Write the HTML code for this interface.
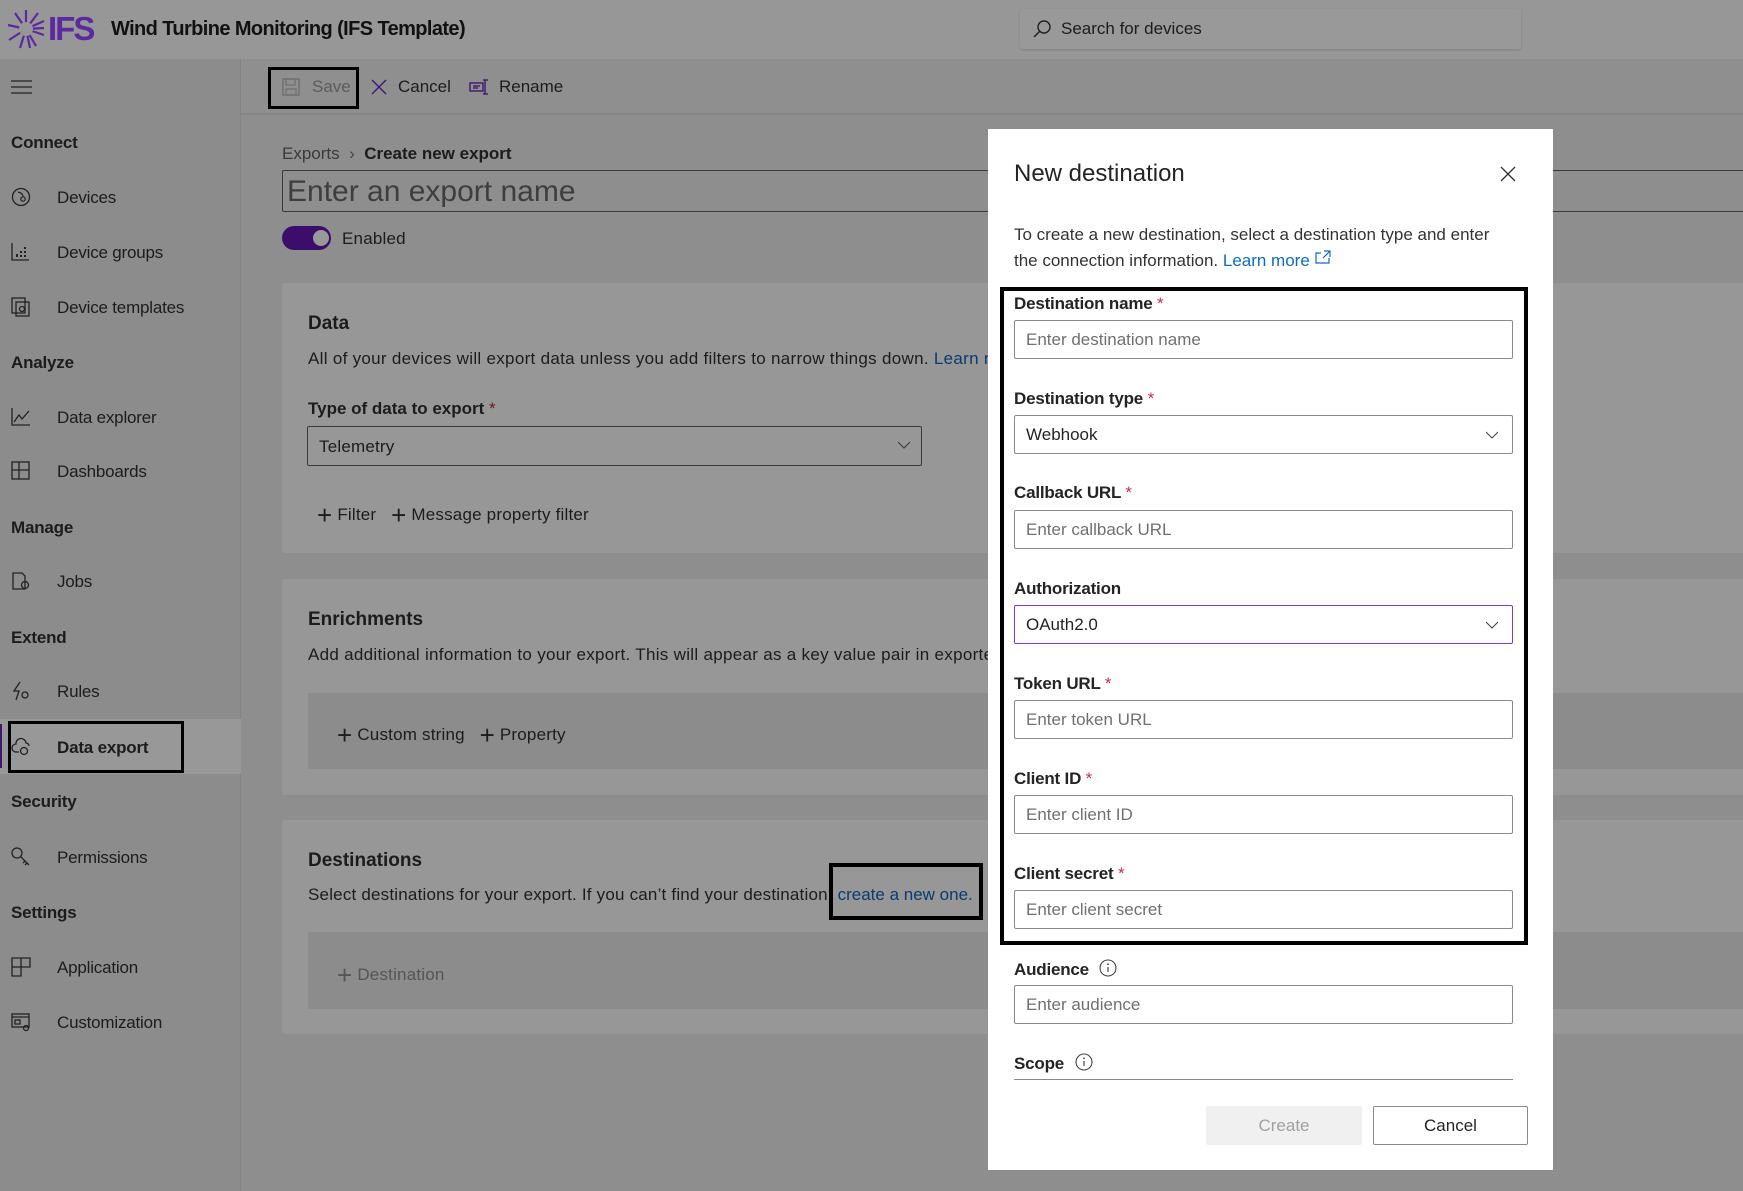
<!DOCTYPE html>
<html><head><meta charset="utf-8"><style>
*{box-sizing:border-box;margin:0;padding:0}
body{width:1743px;height:1191px;position:relative;overflow:hidden;background:#8e8e8e;font-family:"Liberation Sans",sans-serif;color:#1a1a1a}
.a{position:absolute;white-space:nowrap}
.hdr{left:0;top:0;width:1743px;height:59px;background:#979797}
.side{left:0;top:59px;width:241px;height:1132px;background:#8c8c8c;border-right:1px solid #838383}
.tb{left:241px;top:59px;width:1502px;height:56px;background:#8f8f8f;border-bottom:2px solid #858585}
.sh{left:11px;font-size:17px;font-weight:bold;color:#1c1c1c;letter-spacing:-0.2px}
.si{left:57px;font-size:17px;color:#1c1c1c;letter-spacing:-0.2px}
.ic{left:11px;width:20px;height:20px}
.card{background:#979797;border-radius:3px;left:282px;width:1470px}
.inner{background:#8c8c8c;left:308px;width:1440px;border-radius:2px}
.t{font-size:17px;letter-spacing:0.2px;color:#1c1c1c}
.dlg{left:988px;top:129px;width:565px;height:1041px;background:#fff}
.lbl{left:1014px;font-size:17px;font-weight:bold;color:#242424;letter-spacing:-0.2px}
.req{color:#c4314b;font-weight:normal}
.inp{left:1014px;width:499px;height:39px;border:1px solid #8a8a8a;border-radius:2px;padding-left:11px;font-size:17px;color:#707070;line-height:37px}
.chev{position:absolute;right:14px;top:13px;width:12px;height:12px}
</style></head><body>
<div class="a hdr"></div>
<svg class="a" style="left:6px;top:8px" width="40" height="42" viewBox="0 0 40 42"><g stroke="#5b2aa0" stroke-width="2.2" fill="none">
<line x1="20" y1="21" x2="20" y2="2"/><line x1="20" y1="21" x2="32" y2="5"/><line x1="20" y1="21" x2="38" y2="13"/><line x1="20" y1="21" x2="38" y2="27"/><line x1="20" y1="21" x2="30" y2="38"/><line x1="20" y1="21" x2="14" y2="40"/><line x1="20" y1="21" x2="3" y2="32"/><line x1="20" y1="21" x2="2" y2="17"/><line x1="20" y1="21" x2="9" y2="5"/><line x1="20" y1="21" x2="24" y2="40"/><line x1="20" y1="21" x2="38" y2="20"/></g><circle cx="20" cy="21" r="7" fill="#979797"/></svg>
<div class="a" style="left:48px;top:10px;font-size:33px;font-weight:bold;color:#5b2aa0;letter-spacing:-2px">IFS</div>
<div class="a" style="left:111px;top:18px;font-size:20px;font-weight:bold;color:#111;letter-spacing:-0.6px">Wind Turbine Monitoring (IFS Template)</div>
<div class="a" style="left:1020px;top:9px;width:501px;height:40px;background:#999;border-radius:3px;box-shadow:0 1px 2px rgba(0,0,0,.15)"></div>
<svg class="a" style="left:1032px;top:19px" width="20" height="20" viewBox="0 0 20 20"><circle cx="12" cy="8" r="6" stroke="#222" stroke-width="1.4" fill="none"/><line x1="7.5" y1="12.5" x2="2" y2="18" stroke="#222" stroke-width="1.5"/></svg>
<div class="a" style="left:1061px;top:19px;font-size:17px;color:#1c1c1c">Search for devices</div>

<div class="a side"></div>
<div class="a tb"></div>
<svg class="a" style="left:11px;top:80px" width="21" height="14"><g stroke="#222" stroke-width="1.3"><line x1="0" y1="1" x2="21" y2="1"/><line x1="0" y1="7" x2="21" y2="7"/><line x1="0" y1="13" x2="21" y2="13"/></g></svg>
<div class="a" style="left:268px;top:67px;width:91px;height:42px;border:3px solid #000"></div>
<svg class="a" style="left:282px;top:78px" width="18" height="18"><rect x="1" y="1" width="16" height="16" fill="none" stroke="#6e6e6e" stroke-width="1.4"/><rect x="4" y="1" width="9" height="6" fill="none" stroke="#6e6e6e" stroke-width="1.2"/><rect x="4" y="11" width="10" height="6" fill="none" stroke="#6e6e6e" stroke-width="1.2"/></svg>
<div class="a" style="left:312px;top:77px;font-size:17px;color:#5c5c5c">Save</div>
<svg class="a" style="left:371px;top:79px" width="16" height="16"><g stroke="#3b1a70" stroke-width="1.4"><line x1="1" y1="1" x2="15" y2="15"/><line x1="15" y1="1" x2="1" y2="15"/></g></svg>
<div class="a" style="left:398px;top:77px;font-size:17px;color:#1c1c1c">Cancel</div>
<svg class="a" style="left:469px;top:79px" width="20" height="16"><g stroke="#3b1a70" stroke-width="1.4" fill="none"><rect x="1" y="4" width="13" height="8"/><line x1="4" y1="7" x2="11" y2="7"/><line x1="4" y1="9" x2="9" y2="9"/><line x1="16" y1="1" x2="16" y2="15"/><line x1="14" y1="1" x2="19" y2="1"/><line x1="14" y1="15" x2="19" y2="15"/></g></svg>
<div class="a" style="left:499px;top:77px;font-size:17px;color:#1c1c1c">Rename</div>

<!-- sidebar -->
<div class="a sh" style="top:133px">Connect</div>
<svg class="a ic" style="top:187px" viewBox="0 0 20 20"><circle cx="10" cy="10" r="8.5" fill="none" stroke="#222" stroke-width="1.3"/><circle cx="12" cy="12" r="2.2" fill="none" stroke="#222" stroke-width="1.2"/><path d="M7 5 Q12 6 12 10" fill="none" stroke="#222" stroke-width="1.2"/></svg>
<div class="a si" style="top:188px">Devices</div>
<svg class="a ic" style="top:242px" viewBox="0 0 20 20"><path d="M1 1V18H18" fill="none" stroke="#222" stroke-width="1.3"/><g fill="#222"><rect x="5" y="12" width="2" height="3"/><rect x="9" y="9" width="2" height="2"/><rect x="9" y="13" width="2" height="2"/><rect x="13" y="5" width="2" height="2"/><rect x="13" y="9" width="2" height="2"/><rect x="13" y="13" width="2" height="2"/></g></svg>
<div class="a si" style="top:243px">Device groups</div>
<svg class="a ic" style="top:297px" viewBox="0 0 20 20"><g fill="none" stroke="#222" stroke-width="1.3"><rect x="1" y="1" width="13" height="15"/><rect x="5" y="5" width="13" height="14"/><circle cx="11" cy="12" r="2.5"/></g></svg>
<div class="a si" style="top:298px">Device templates</div>
<div class="a sh" style="top:353px">Analyze</div>
<svg class="a ic" style="top:407px" viewBox="0 0 20 20"><path d="M1 1V18H19M3 15L8 8L11 12L18 4" fill="none" stroke="#222" stroke-width="1.3"/></svg>
<div class="a si" style="top:408px">Data explorer</div>
<svg class="a ic" style="top:461px" viewBox="0 0 20 20"><g fill="none" stroke="#222" stroke-width="1.3"><rect x="1" y="1" width="17" height="17"/><line x1="8" y1="1" x2="8" y2="18"/><line x1="1" y1="9" x2="18" y2="9"/></g></svg>
<div class="a si" style="top:462px">Dashboards</div>
<div class="a sh" style="top:518px">Manage</div>
<svg class="a ic" style="top:571px" viewBox="0 0 20 20"><g fill="none" stroke="#222" stroke-width="1.3"><path d="M2 2H11L14 5V18H2Z"/><circle cx="14" cy="14" r="3.5"/></g></svg>
<div class="a si" style="top:572px">Jobs</div>
<div class="a sh" style="top:628px">Extend</div>
<svg class="a ic" style="top:681px" viewBox="0 0 20 20"><g fill="none" stroke="#222" stroke-width="1.3"><path d="M9 1L3 10H8L5 19"/><circle cx="14" cy="14" r="3"/></g></svg>
<div class="a si" style="top:682px">Rules</div>
<div class="a" style="left:0;top:719px;width:241px;height:55px;background:#989898"></div>
<div class="a" style="left:0;top:724px;width:2px;height:44px;background:#3b1a70"></div>
<div class="a" style="left:8px;top:721px;width:176px;height:52px;border:3px solid #000"></div>
<svg class="a ic" style="top:737px" viewBox="0 0 20 20"><g fill="none" stroke="#222" stroke-width="1.3"><path d="M8 15H5A4 4 0 0 1 5 7A5 5 0 0 1 15 6A3 3 0 0 1 18 9"/><circle cx="13" cy="14" r="3.5"/></g></svg>
<div class="a si" style="top:738px;font-weight:bold">Data export</div>
<div class="a sh" style="top:792px">Security</div>
<svg class="a ic" style="top:847px" viewBox="0 0 20 20"><g fill="none" stroke="#222" stroke-width="1.3"><circle cx="6" cy="6" r="5"/><path d="M10 10L18 18M14 14L12 16M16 16L14 18"/></g></svg>
<div class="a si" style="top:848px">Permissions</div>
<div class="a sh" style="top:903px">Settings</div>
<svg class="a ic" style="top:957px" viewBox="0 0 20 20"><g fill="none" stroke="#222" stroke-width="1.3"><path d="M1 1H19V10H10V19H1Z"/><line x1="10" y1="1" x2="10" y2="10"/><line x1="1" y1="10" x2="10" y2="10"/></g></svg>
<div class="a si" style="top:958px">Application</div>
<svg class="a ic" style="top:1012px" viewBox="0 0 20 20"><g fill="none" stroke="#222" stroke-width="1.3"><rect x="1" y="2" width="17" height="13"/><line x1="1" y1="5" x2="18" y2="5"/><rect x="4" y="8" width="5" height="4"/><circle cx="15" cy="16" r="2.5"/></g></svg>
<div class="a si" style="top:1013px">Customization</div>

<!-- main -->
<div class="a t" style="left:282px;top:144px;color:#3a3a3a;letter-spacing:0">Exports <span style="color:#444">&nbsp;›&nbsp;</span> <b style="color:#1c1c1c">Create new export</b></div>
<div class="a" style="left:282px;top:170px;width:1470px;height:42px;border:1px solid #3a3a3a;border-radius:2px"></div>
<div class="a" style="left:287px;top:175px;font-size:30px;color:#3e3e3e">Enter an export name</div>
<div class="a" style="left:282px;top:226px;width:49px;height:24px;border-radius:12px;background:#3b0e6b"></div>
<div class="a" style="left:313px;top:230px;width:16px;height:16px;border-radius:8px;background:#999"></div>
<div class="a t" style="left:342px;top:229px">Enabled</div>

<div class="a card" style="top:283px;height:270px"></div>
<div class="a t" style="left:308px;top:313px;font-size:19px;font-weight:bold;letter-spacing:0">Data</div>
<div class="a t" style="left:308px;top:349px;letter-spacing:0.3px">All of your devices will export data unless you add filters to narrow things down. <span style="color:#0a3a6e">Learn more</span></div>
<div class="a t" style="left:308px;top:399px;font-weight:bold;letter-spacing:0">Type of data to export <span style="color:#6b1a1a;font-weight:normal">*</span></div>
<div class="a" style="left:307px;top:426px;width:615px;height:40px;border:1px solid #3a3a3a;border-radius:2px"></div>
<div class="a t" style="left:319px;top:437px">Telemetry</div>
<svg class="a" style="left:897px;top:440px" width="14" height="10"><path d="M1 2L7 8L13 2" fill="none" stroke="#444" stroke-width="1.2"/></svg>
<div class="a t" style="left:317px;top:500px"><span style="font-size:26px;vertical-align:-4px">+</span> Filter &nbsp;&nbsp;<span style="font-size:26px;vertical-align:-4px">+</span> Message property filter</div>

<div class="a card" style="top:579px;height:216px"></div>
<div class="a t" style="left:308px;top:609px;font-size:19px;font-weight:bold;letter-spacing:0">Enrichments</div>
<div class="a t" style="left:308px;top:645px;letter-spacing:0.3px">Add additional information to your export. This will appear as a key value pair in exported data.</div>
<div class="a inner" style="top:693px;height:76px"></div>
<div class="a t" style="left:337px;top:720px"><span style="font-size:26px;vertical-align:-4px">+</span> Custom string &nbsp;&nbsp;<span style="font-size:26px;vertical-align:-4px">+</span> Property</div>

<div class="a card" style="top:820px;height:214px"></div>
<div class="a t" style="left:308px;top:850px;font-size:19px;font-weight:bold;letter-spacing:0">Destinations</div>
<div class="a t" style="left:308px;top:885px;letter-spacing:0.2px">Select destinations for your export. If you can’t find your destination, <span style="color:#0a3a6e;letter-spacing:0">create a new one.</span></div>
<div class="a" style="left:829px;top:863px;width:154px;height:57px;border:4px solid #000"></div>
<div class="a inner" style="top:932px;height:77px"></div>
<div class="a t" style="left:337px;top:960px;color:#555"><span style="font-size:26px;vertical-align:-4px">+</span> Destination</div>

<!-- dialog -->
<div class="a dlg"></div>
<div class="a" style="left:1014px;top:160px;font-size:24px;color:#242424">New destination</div>
<svg class="a" style="left:1500px;top:166px" width="16" height="16"><g stroke="#333" stroke-width="1.3"><line x1="1" y1="1" x2="15" y2="15"/><line x1="15" y1="1" x2="1" y2="15"/></g></svg>
<div class="a" style="left:1014px;top:222px;font-size:17px;line-height:26px;color:#333;letter-spacing:0">To create a new destination, select a destination type and enter<br>the connection information. <span style="color:#0f6cbd">Learn more</span> <svg width="16" height="14" style="vertical-align:2px"><path d="M6 3H1V13H14V8M9 1H15V7M15 1L8 8" fill="none" stroke="#0f6cbd" stroke-width="1.2"/></svg></div>
<div class="a" style="left:1000px;top:287px;width:528px;height:658px;border:4px solid #000"></div>

<div class="a lbl" style="top:294px">Destination name <span class="req">*</span></div>
<div class="a inp" style="top:320px">Enter destination name</div>
<div class="a lbl" style="top:389px">Destination type <span class="req">*</span></div>
<div class="a inp" style="top:415px;color:#242424">Webhook<svg class="chev" viewBox="0 0 12 12"><path d="M0 3L6 9L12 3" fill="none" stroke="#444" stroke-width="1.1"/></svg></div>
<div class="a lbl" style="top:483px">Callback URL <span class="req">*</span></div>
<div class="a inp" style="top:510px">Enter callback URL</div>
<div class="a lbl" style="top:579px">Authorization</div>
<div class="a inp" style="top:605px;color:#242424;border:1.5px solid #7a3ad6">OAuth2.0<svg class="chev" viewBox="0 0 12 12"><path d="M0 3L6 9L12 3" fill="none" stroke="#444" stroke-width="1.1"/></svg></div>
<div class="a lbl" style="top:674px">Token URL <span class="req">*</span></div>
<div class="a inp" style="top:700px">Enter token URL</div>
<div class="a lbl" style="top:769px">Client ID <span class="req">*</span></div>
<div class="a inp" style="top:795px">Enter client ID</div>
<div class="a lbl" style="top:864px">Client secret <span class="req">*</span></div>
<div class="a inp" style="top:890px">Enter client secret</div>
<div class="a lbl" style="top:959px">Audience <svg width="18" height="18" style="vertical-align:-2px;margin-left:6px"><circle cx="9" cy="9" r="8" fill="none" stroke="#444" stroke-width="1.1"/><line x1="9" y1="8" x2="9" y2="13" stroke="#444" stroke-width="1.2"/><circle cx="9" cy="5.3" r="0.9" fill="#444"/></svg></div>
<div class="a inp" style="top:985px">Enter audience</div>
<div class="a lbl" style="top:1053px">Scope <svg width="18" height="18" style="vertical-align:-2px;margin-left:6px"><circle cx="9" cy="9" r="8" fill="none" stroke="#444" stroke-width="1.1"/><line x1="9" y1="8" x2="9" y2="13" stroke="#444" stroke-width="1.2"/><circle cx="9" cy="5.3" r="0.9" fill="#444"/></svg></div>
<div class="a" style="left:1014px;top:1079px;width:499px;height:1px;background:#8a8a8a"></div>
<div class="a" style="left:1206px;top:1106px;width:156px;height:39px;background:#f0f0f0;border-radius:2px;text-align:center;line-height:39px;font-size:17px;color:#a0a0a0">Create</div>
<div class="a" style="left:1373px;top:1106px;width:155px;height:39px;border:1px solid #8a8a8a;border-radius:2px;text-align:center;line-height:37px;font-size:17px;color:#242424">Cancel</div>
</body></html>
